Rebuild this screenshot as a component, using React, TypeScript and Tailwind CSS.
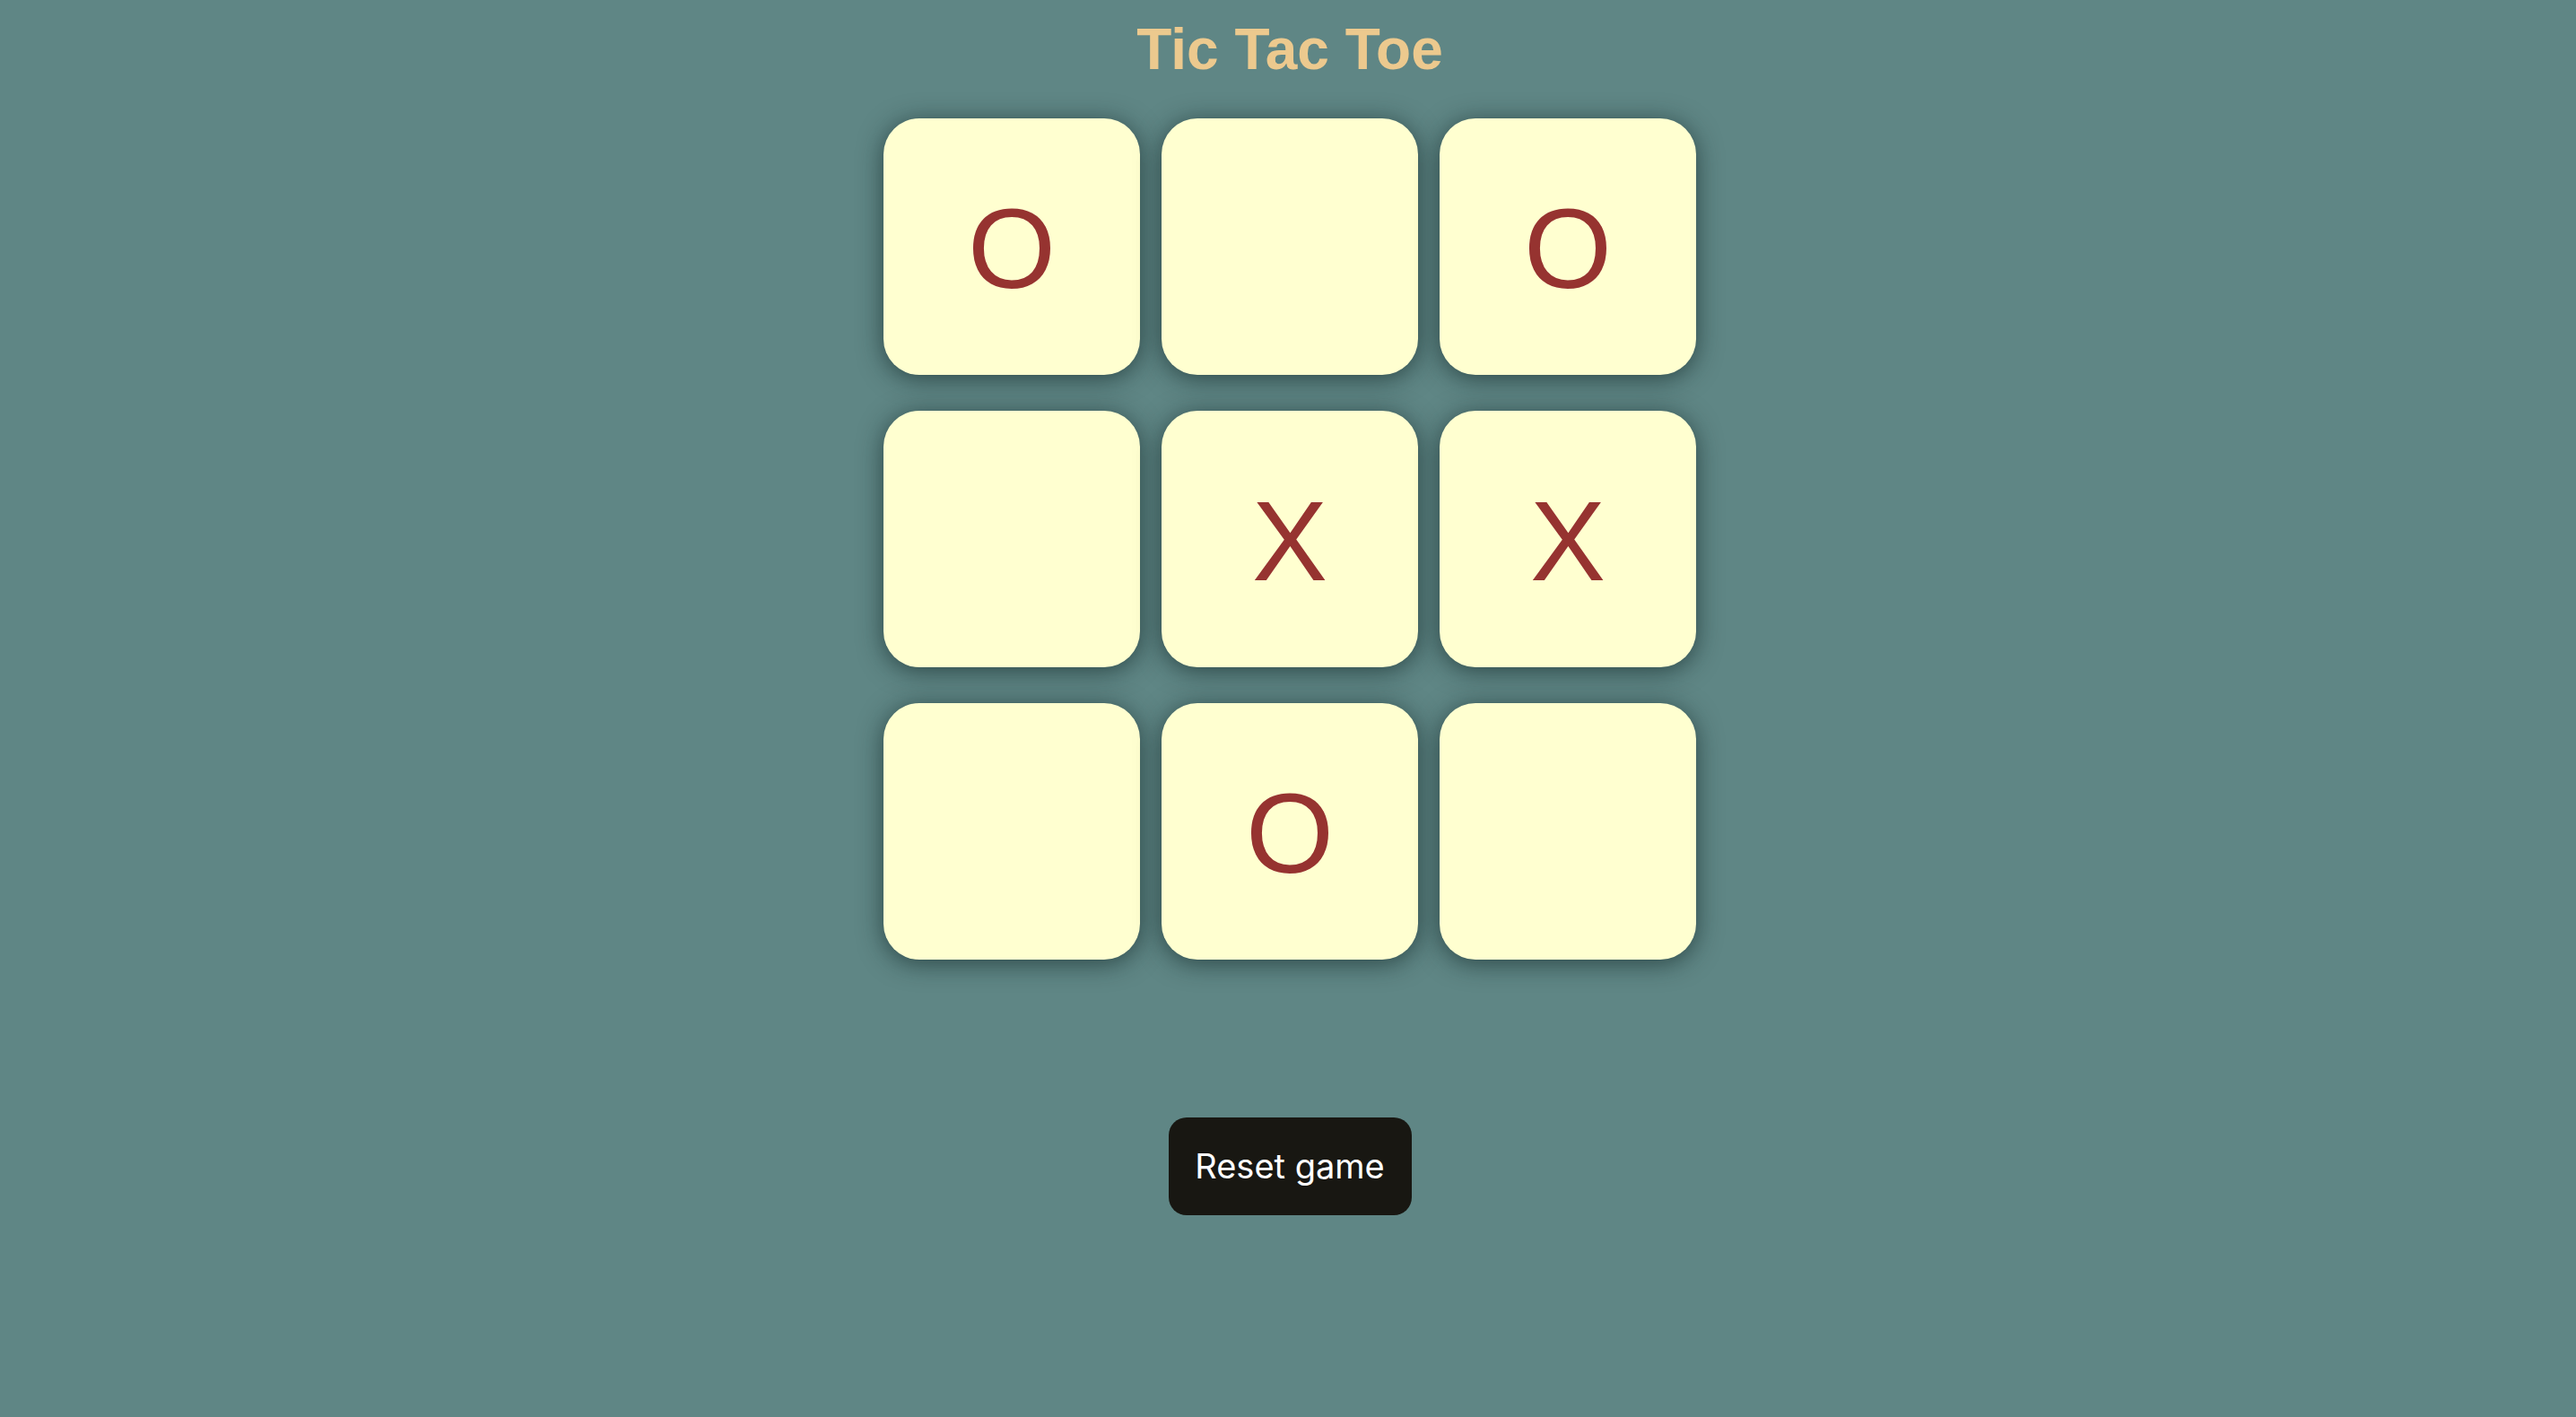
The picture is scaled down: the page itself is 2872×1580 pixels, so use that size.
import { useState } from "react";

type Mark = "X" | "O" | null;

const startBoard: Mark[] = ["O", null, "O", null, "X", "X", null, "O", null];

const Square: React.FC<{ value: Mark; onClick: () => void }> = ({ value, onClick }) => {
  return (
    <button
      onClick={onClick}
      className="w-[286px] h-[286px] flex items-center justify-center pt-[6px] rounded-[40px] bg-[#ffffd0] shadow-[0_4px_28px_rgba(15,35,35,0.65)] text-[126px] text-[#963330] font-['Liberation_Sans',Arial,sans-serif] leading-none"
    >
      {value}
    </button>
  );
};

export default function App() {
  const [board, setBoard] = useState<Mark[]>(startBoard);
  const [next, setNext] = useState<Mark>("X");

  const play = (i: number) => {
    if (board[i]) return;
    const copy = [...board];
    copy[i] = next;
    setBoard(copy);
    setNext(next === "X" ? "O" : "X");
  };

  const reset = () => {
    setBoard(Array(9).fill(null));
    setNext("X");
  };

  return (
    <div className="min-h-screen w-full bg-[#5f8685] flex flex-col items-center pl-[4px]">
      <h1 className="mt-[23px] text-[64px] leading-[64px] font-bold text-[#ecc98e] font-['Liberation_Sans',Arial,sans-serif]">
        Tic Tac Toe
      </h1>

      <div className="mt-[45px] grid grid-cols-[repeat(3,286px)] gap-x-[24px] gap-y-[40px]">
        {board.map((v, i) => (
          <Square key={i} value={v} onClick={() => play(i)} />
        ))}
      </div>

      <button
        onClick={reset}
        className="mt-[176px] h-[109px] w-[271px] rounded-[20px] bg-[#181712] text-white text-[38px] font-['Inter',sans-serif]"
      >
        Reset game
      </button>
    </div>
  );
}
